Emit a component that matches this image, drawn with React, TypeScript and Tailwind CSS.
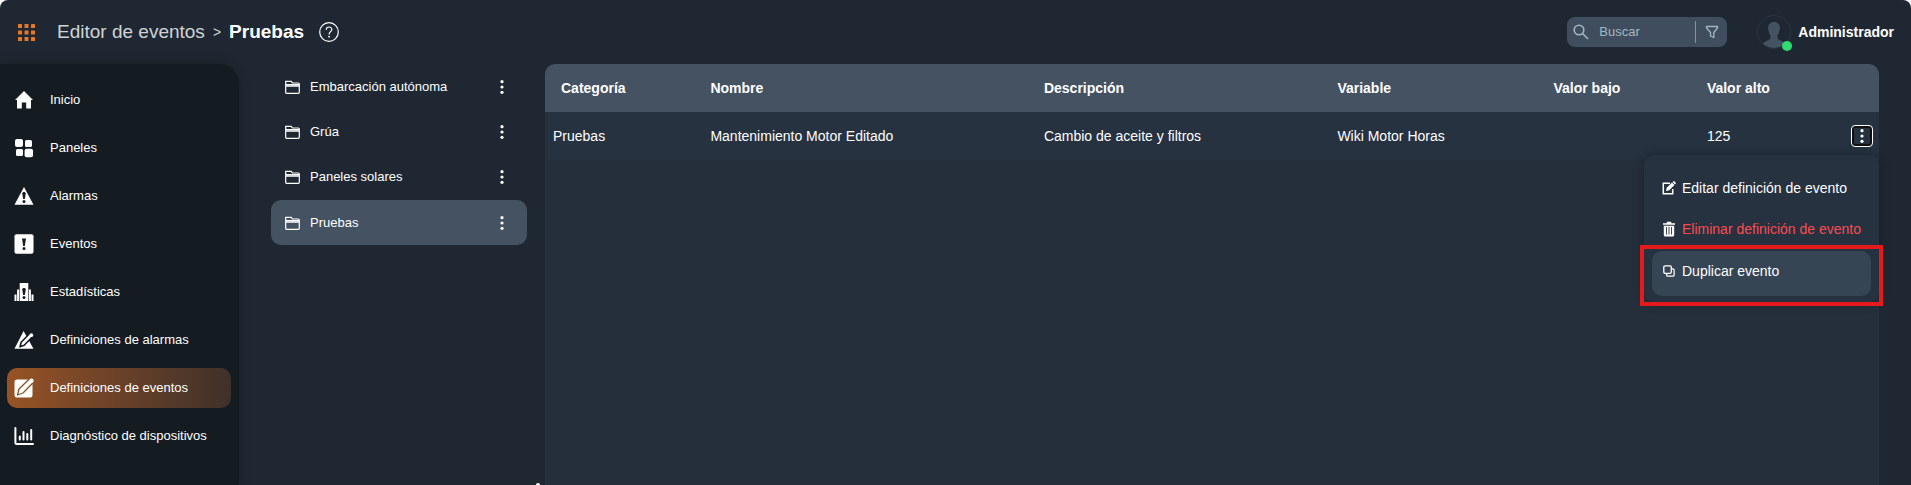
import { useState } from "react";
import type { ReactNode } from "react";

const HomeIcon = () => (
  <svg viewBox="0 0 20 20" className="size-5 shrink-0" fill="currentColor">
    <path d="M10 1 19 10h-2v8.5h-4.8v-6H7.8v6H3V10H1z" />
  </svg>
);

const PanelsIcon = () => (
  <svg viewBox="0 0 20 20" className="size-5 shrink-0" fill="currentColor">
    <rect x="1" y="1" width="8" height="8" rx="2" />
    <rect x="11" y="2" width="7" height="7" rx="1.6" />
    <rect x="2" y="11" width="7" height="7" rx="1.6" />
    <rect x="10.6" y="10.8" width="8.4" height="8.4" rx="2" />
  </svg>
);

const AlarmIcon = () => (
  <svg viewBox="0 0 20 20" className="size-5 shrink-0">
    <path d="M10 1 19.5 18.8H.5z" fill="currentColor" />
    <path d="M8.2 7.6c0-2.2 3.6-2.2 3.6 0L10.8 13H9.2z" fill="#141c22" />
    <circle cx="10" cy="15.6" r="1.5" fill="#141c22" />
  </svg>
);

const EventIcon = () => (
  <svg viewBox="0 0 20 20" className="size-5 shrink-0">
    <rect x=".5" y=".3" width="19" height="19.4" rx="2" fill="currentColor" />
    <path d="M8 4.5h4L10.8 12H9.2z" fill="#141c22" />
    <circle cx="10" cy="14.6" r="1.5" fill="#141c22" />
  </svg>
);

const StatsIcon = () => (
  <svg viewBox="0 0 20 20" className="size-5 shrink-0">
    <path
      d="M.5 12.5h2V19h-2zM3.1 7.5h2V19h-2zM5.7 1h8.6v18H5.7zM14.9 7.5h2V19h-2zM17.5 12.5h2V19h-2z"
      fill="currentColor"
    />
    <path d="M8.2 7.6c0-2 3.6-2 3.6 0l-1 5.4H9.2z" fill="#141c22" />
    <circle cx="10" cy="15.6" r="1.5" fill="#141c22" />
  </svg>
);

const AlarmEditIcon = () => (
  <svg viewBox="0 0 20 20" className="size-5 shrink-0">
    <path d="M9.6 1 19.5 18.8H.5z" fill="currentColor" />
    <path
      d="m6 16.8 1.2-4.6 8.2-8.4 3 3-8.2 8.4z"
      fill="currentColor"
      stroke="#141c22"
      strokeWidth="1.6"
      strokeLinejoin="round"
    />
    <circle cx="17.3" cy="5.2" r="1.9" fill="currentColor" />
  </svg>
);

const EventEditIcon = () => (
  <svg viewBox="0 0 20 20" className="size-5 shrink-0">
    <rect x=".5" y="1.5" width="18" height="18" rx="2.5" fill="currentColor" />
    <path
      d="m3.5 17 1.5-6L15 1.2 18.8 5 9 15z"
      fill="currentColor"
      stroke="#8c5126"
      strokeWidth="1.3"
      strokeLinejoin="round"
    />
    <circle cx="17.5" cy="2.7" r="2.2" fill="currentColor" />
  </svg>
);

const DiagnosticIcon = () => (
  <svg
    viewBox="0 0 20 20"
    className="size-5 shrink-0"
    fill="none"
    stroke="currentColor"
    strokeWidth="2"
    strokeLinecap="round"
  >
    <path d="M1.4 2v14.5q0 1.500 1.500 1.500H19M5.800 10.500v3M9.500 6v7.500M13.300 8v5.500M17.200 4v9.500" />
  </svg>
);

const FolderIcon = () => (
  <svg viewBox="0 0 15 14" className="h-3.5 w-[15px] shrink-0" fill="none">
    <path d="M1 5h13v2H1z" fill="currentColor" opacity=".75" />
    <path
      d="M.7 12.3V1.3h5.500L7.500 3h5.800q1 0 1 1v8.300q0 1-1 1H1.700q-1 0-1-1M.7 4.600h13.600"
      stroke="currentColor"
      strokeWidth="1.2"
    />
  </svg>
);

const DotsIcon = () => (
  <svg viewBox="0 0 4 16" className="h-4 w-1" fill="currentColor">
    <circle cx="2" cy="2.7" r="1.6" />
    <circle cx="2" cy="8" r="1.6" />
    <circle cx="2" cy="13.3" r="1.6" />
  </svg>
);

const AppsIcon = () => (
  <svg viewBox="0 0 17 17" className="size-[17px]" fill="#e87722">
    {[0, 6.5, 13].map((y) =>
      [0, 6.5, 13].map((x) => (
        <rect key={`${x}-${y}`} x={x} y={y} width="4" height="4" rx=".5" />
      ))
    )}
  </svg>
);

const HelpIcon = () => (
  <svg viewBox="0 0 20 20" className="size-5" fill="none" stroke="currentColor">
    <circle cx="10" cy="10" r="9.3" strokeWidth="1.2" />
    <path
      d="M7.3 7.8c0-3.800 5.500-3.600 5.500-.3 0 2-2.700 2.300-2.700 4.900"
      strokeWidth="1.2"
    />
    <circle cx="10.1" cy="14.7" r=".9" fill="currentColor" stroke="none" />
  </svg>
);

const SearchIcon = () => (
  <svg
    viewBox="0 0 16 16"
    className="size-4 shrink-0"
    fill="none"
    stroke="currentColor"
    strokeWidth="1.6"
  >
    <circle cx="6" cy="6" r="4.8" />
    <path d="m9.5 9.5 5.5 5.5" />
  </svg>
);

const FilterIcon = () => (
  <svg
    viewBox="0 0 14 14"
    className="size-3.5"
    fill="none"
    stroke="currentColor"
    strokeWidth="1.3"
    strokeLinejoin="round"
  >
    <path d="M1.5 1.5h11V3L8.8 7.500v5L5.500 11V7.500L1.500 3z" />
  </svg>
);

const AvatarIcon = () => (
  <svg viewBox="0 0 34 34" className="size-[34px]">
    <circle cx="17" cy="17" r="16.5" fill="#1f2832" stroke="#2b3743" />
    <path
      d="M17 7c4 0 6 2.8 5.8 6.500-.1 3-1.300 5.500-2.300 7V23c0 2 5.500 3 7.500 5.500a16 16 0 0 1-22 0c2-2.500 7.500-3.500 7.500-5.500v-2.500c-1-1.500-2.200-4-2.300-7C11 9.800 13 7 17 7z"
      fill="#455261"
    />
  </svg>
);

const EditIcon = () => (
  <svg viewBox="0 0 14 14" className="size-3.5 shrink-0" fill="none">
    <path d="M8 2.3H1.3v10.4h9.4V8" stroke="currentColor" strokeWidth="1.5" />
    <path
      d="m4 10 .7-3.300L10 1.600l2.400 2.400-5.200 5.300zM10.600 1l.9-.8q.4-.3.800 0l1.500 1.500q.3.400 0 .8l-.9.900z"
      fill="currentColor"
    />
  </svg>
);

const TrashIcon = () => (
  <svg viewBox="0 0 14 16" className="h-4 w-3.5 shrink-0">
    <path
      d="M1 2.2h3.500L5 .8h4l.5 1.400H13v1.500H1zM1.800 4.800h10.400V14q0 1.500-1.500 1.500H3.300Q1.800 15.500 1.800 14z"
      fill="currentColor"
    />
    <path d="M4.5 6v7.5M7 6v7.5M9.5 6v7.5" stroke="#263240" strokeWidth=".9" />
  </svg>
);

const CopyIcon = () => (
  <svg
    viewBox="0 0 14 14"
    className="size-3.5 shrink-0"
    fill="none"
    stroke="currentColor"
    strokeWidth="1.3"
  >
    <rect x="1.8" y="1.8" width="7.5" height="7.5" rx="1.2" />
    <path d="M4.7 9.8V11q0 1.200 1.200 1.200h5q1.200 0 1.200-1.200V6q0-1.200-1.200-1.200h-1" />
  </svg>
);

const menuItems: { label: string; icon: ReactNode }[] = [
  { label: "Inicio", icon: <HomeIcon /> },
  { label: "Paneles", icon: <PanelsIcon /> },
  { label: "Alarmas", icon: <AlarmIcon /> },
  { label: "Eventos", icon: <EventIcon /> },
  { label: "Estadísticas", icon: <StatsIcon /> },
  { label: "Definiciones de alarmas", icon: <AlarmEditIcon /> },
  { label: "Definiciones de eventos", icon: <EventEditIcon /> },
  { label: "Diagnóstico de dispositivos", icon: <DiagnosticIcon /> },
];

const categories = ["Embarcación autónoma", "Grúa", "Paneles solares", "Pruebas"];

const Header = ({ category }: { category: string }) => {
  const [search, setSearch] = useState("");

  return (
    <header className="flex h-16 shrink-0 items-center justify-between pr-[17px] pl-[18px]">
      <div className="flex items-center">
        <button type="button" aria-label="Aplicaciones">
          <AppsIcon />
        </button>
        <h1 className="ml-[22px] flex items-center text-[19px] leading-6">
          <span className="text-[#d0d3d6]">Editor de eventos</span>
          <span className="mx-2 text-sm text-[#d0d3d6]">&gt;</span>
          <span className="font-bold">{category}</span>
        </h1>
        <button type="button" aria-label="Ayuda" className="ml-[15px]">
          <HelpIcon />
        </button>
      </div>
      <div className="flex items-center">
        <div className="flex h-[30px] w-40 items-center rounded-lg bg-[#3f4d5f] pl-1.5 text-[#a3b8bf]">
          <SearchIcon />
          <input
            type="text"
            aria-label="Buscar"
            placeholder="Buscar"
            value={search}
            onChange={(e) => setSearch(e.target.value)}
            className="ml-2.5 w-24 min-w-0 text-[13px] outline-none placeholder:text-[#a3b8bf]"
          />
          <button
            type="button"
            aria-label="Filtrar"
            className="flex h-[22px] w-8 shrink-0 items-center justify-center border-l border-[#8195a0]"
          >
            <FilterIcon />
          </button>
        </div>
        <button type="button" className="ml-[30px] flex items-center">
          <span className="relative">
            <AvatarIcon />
            <span className="absolute -right-px -bottom-0.5 size-2.5 rounded-full bg-[#2fdc72]" />
          </span>
          <span className="ml-[7px] text-sm font-bold">Administrador</span>
        </button>
      </div>
    </header>
  );
};

const Sidebar = () => (
  <nav className="w-[239px] shrink-0 rounded-tr-[20px] bg-[#141c22] pt-4 pr-2 pl-[7px] shadow-[0_0_12px_rgba(0,0,0,0.3)]">
    <ul className="flex flex-col gap-2">
      {menuItems.map(({ label, icon }) => (
        <li key={label}>
          <a
            href="#"
            className={`flex h-10 items-center gap-4 rounded-[10px] pl-[7px] text-[13px] ${
              label === "Definiciones de eventos"
                ? "bg-linear-to-r from-[#985324] to-[#3f3028]"
                : ""
            }`}
          >
            {icon}
            {label}
          </a>
        </li>
      ))}
    </ul>
  </nav>
);

const Categories = ({
  selected,
  onSelect,
}: {
  selected: string;
  onSelect: (name: string) => void;
}) => (
  <ul className="ml-8 w-64 shrink-0">
    {categories.map((name) => (
      <li
        key={name}
        className={`flex h-[45px] items-center rounded-[10px] pr-[23px] pl-3.5 ${
          name === selected ? "mt-px bg-[#455261]" : ""
        }`}
      >
        <button
          type="button"
          onClick={() => onSelect(name)}
          className="flex flex-1 items-center gap-2.5 text-left text-[13px]"
        >
          <FolderIcon />
          {name}
        </button>
        <button type="button" aria-label={`Opciones de ${name}`}>
          <DotsIcon />
        </button>
      </li>
    ))}
  </ul>
);

const RowMenu = () => (
  <div
    role="menu"
    className="absolute top-[91px] right-0 w-[235px] rounded-[10px] bg-[#263240] px-2 pt-3 pb-1.5 shadow-[0_0_12px_rgba(0,0,0,0.3)]"
  >
    <button
      type="button"
      role="menuitem"
      className="flex h-[41px] w-full items-center gap-1.5 pl-2.5"
    >
      <EditIcon />
      Editar definición de evento
    </button>
    <button
      type="button"
      role="menuitem"
      className="flex h-[41px] w-full items-center gap-1.5 pl-2.5"
    >
      <TrashIcon />
      <span className="text-[#fb4b50]">Eliminar definición de evento</span>
    </button>
    <div className="relative mt-0.5">
      <button
        type="button"
        role="menuitem"
        className="flex h-[45px] w-full items-center gap-1.5 rounded-[10px] bg-[#364553] pb-1.5 pl-2.5"
      >
        <CopyIcon />
        Duplicar evento
      </button>
      <div className="pointer-events-none absolute -inset-x-3 -top-1.5 -bottom-2.5 border-4 border-[#e51a1c]" />
    </div>
  </div>
);

const EventsTable = () => {
  const [open, setOpen] = useState(true);

  return (
    <main className="relative mr-8 min-w-0 flex-1 rounded-t-[10px] bg-[#252f3b] text-sm">
      <table className="w-full table-fixed text-left">
        <thead>
          <tr className="h-12 bg-[#455261]">
            <th className="w-[11.8%] rounded-tl-[10px] pl-4">Categoría</th>
            <th className="w-[25%] pl-2">Nombre</th>
            <th className="w-[22%] pl-2">Descripción</th>
            <th className="w-[16.2%] pl-2">Variable</th>
            <th className="w-[11.5%] pl-2">Valor bajo</th>
            <th className="pl-2">Valor alto</th>
            <th className="w-9 rounded-tr-[10px]" />
          </tr>
        </thead>
        <tbody>
          <tr className="h-12 bg-[#263240]">
            <td className="pl-2">Pruebas</td>
            <td className="pl-2">Mantenimiento Motor Editado</td>
            <td className="pl-2">Cambio de aceite y filtros</td>
            <td className="pl-2">Wiki Motor Horas</td>
            <td className="pl-2" />
            <td className="pl-2">125</td>
            <td className="pl-2">
              <button
                type="button"
                aria-label="Opciones del evento"
                onClick={() => setOpen(!open)}
                className="flex size-[22px] items-center justify-center rounded border border-white ring-2 ring-[#101010] ring-inset"
              >
                <DotsIcon />
              </button>
            </td>
          </tr>
        </tbody>
      </table>
      {open && <RowMenu />}
    </main>
  );
};

const App = () => {
  const [category, setCategory] = useState("Pruebas");

  return (
    <div className="flex h-screen flex-col overflow-hidden rounded-t-lg bg-[#1f2832] font-['Liberation_Sans',Arial,sans-serif] text-white">
      <Header category={category} />
      <div className="flex min-h-0 flex-1">
        <Sidebar />
        <Categories selected={category} onSelect={setCategory} />
        {/* drag handle between the two panels */}
        <div className="flex w-[18px] shrink-0 cursor-col-resize items-end justify-center pl-1">
          <span className="h-0.5 w-1 rounded-t-full bg-white" />
        </div>
        <EventsTable />
      </div>
    </div>
  );
};

export default App;
